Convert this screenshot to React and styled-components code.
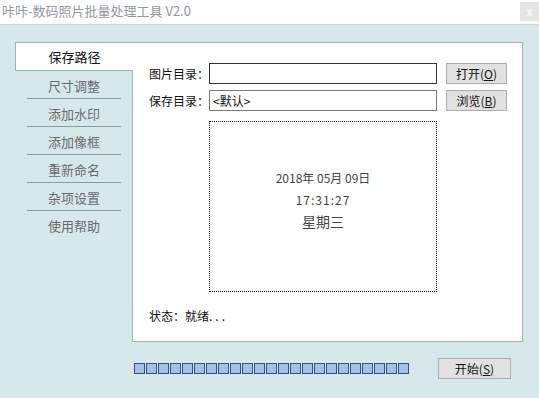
import React from "react";
import styled, { createGlobalStyle } from "styled-components";

const GlobalStyle = createGlobalStyle`
  html, body {
    margin: 0;
    padding: 0;
    background: #d7e8eb;
  }
  * {
    box-sizing: border-box;
  }
`;

const FONT = `"Noto Sans CJK SC", "Liberation Sans", sans-serif`;

const tabs = ["尺寸调整", "添加水印", "添加像框", "重新命名", "杂项设置", "使用帮助"];

export default function App() {
  const blocks = Array.from({ length: 23 });
  return (
    <Window>
      <GlobalStyle />
      <TitleBar>
        <Title>咔咔-数码照片批量处理工具 V2.0</Title>
        <CloseButton>x</CloseButton>
      </TitleBar>
      <Body>
        <Main>
          <Sidebar>
            <ActiveTab>保存路径</ActiveTab>
            <TabList>
              {tabs.map((t, i) => (
                <TabItem key={t} last={i === tabs.length - 1}>
                  {t}
                </TabItem>
              ))}
            </TabList>
          </Sidebar>
          <Panel>
            <FieldRow>
              <Label>图片目录：</Label>
              <Input dark />
              <Button>
                打开(<u>O</u>)
              </Button>
            </FieldRow>
            <FieldRow>
              <Label>保存目录：</Label>
              <Input>&lt;默认&gt;</Input>
              <Button>
                浏览(<u>B</u>)
              </Button>
            </FieldRow>
            <ClockBox>
              <DateLine>2018年 05月 09日</DateLine>
              <TimeLine>17:31:27</TimeLine>
              <WeekLine>星期三</WeekLine>
            </ClockBox>
            <Status>
              状态：就绪<Dots>...</Dots>
            </Status>
          </Panel>
        </Main>
        <Footer>
          <Progress>
            {blocks.map((_, i) => (
              <Block key={i} />
            ))}
          </Progress>
          <StartButton>
            开始(<u>S</u>)
          </StartButton>
        </Footer>
      </Body>
    </Window>
  );
}

const Window = styled.div`
  width: 539px;
  height: 398px;
  background: #d7e8eb;
  font-family: ${FONT};
  font-size: 12px;
  color: #111;
  overflow: hidden;
`;

const TitleBar = styled.div`
  height: 25px;
  background: #ffffff;
  border-bottom: 1px solid #cadcdf;
  display: flex;
  align-items: flex-start;
  justify-content: space-between;
`;

const Title = styled.div`
  padding: 2px 0 0 2px;
  font-size: 13px;
  color: #9297a0;
  line-height: 18px;
`;

const CloseButton = styled.div`
  margin-top: 2px;
  width: 19px;
  height: 19px;
  background: #e5e5e5;
  color: #f7f7f7;
  font-family: "Liberation Sans", sans-serif;
  font-size: 12px;
  font-weight: bold;
  display: flex;
  align-items: center;
  justify-content: center;
`;

const Body = styled.div`
  padding: 17px 16px 0 15px;
`;

const Main = styled.div`
  display: flex;
  height: 300px;
`;

const Sidebar = styled.div`
  width: 118px;
  display: flex;
  flex-direction: column;
  position: relative;
  z-index: 1;
  margin-right: -1px;
`;

const ActiveTab = styled.div`
  height: 29px;
  background: #ffffff;
  border: 1px solid #a4b0b3;
  border-right: none;
  display: flex;
  align-items: center;
  justify-content: center;
  font-size: 13px;
  color: #111;
`;

const TabList = styled.div`
  display: flex;
  flex-direction: column;
  align-items: center;
`;

const TabItem = styled.div`
  width: 94px;
  height: 28px;
  border-bottom: 1px solid ${(p) => (p.last ? "transparent" : "#8d9c9f")};
  display: flex;
  align-items: center;
  justify-content: center;
  padding-top: 2px;
  font-size: 13px;
  color: #6a6a6a;
`;

const Panel = styled.div`
  flex: 1;
  background: #ffffff;
  border: 1px solid #a4b0b3;
  padding: 20px 0 0 16px;
  display: flex;
  flex-direction: column;
`;

const FieldRow = styled.div`
  display: flex;
  align-items: center;
  height: 21px;
  margin-bottom: 6px;
`;

const Label = styled.div`
  width: 60px;
  flex-shrink: 0;
  white-space: nowrap;
  font-size: 12px;
  color: #111;
`;

const Input = styled.div`
  width: 228px;
  flex-shrink: 0;
  height: 21px;
  border: 1px solid ${(p) => (p.dark ? "#333" : "#7a7a7a")};
  background: #fff;
  padding: 0 3px;
  display: flex;
  align-items: center;
  font-size: 12px;
  color: #111;
`;

const Button = styled.div`
  margin-left: 9px;
  width: 61px;
  flex-shrink: 0;
  height: 21px;
  background: #e1e1e1;
  border: 1px solid #adadad;
  display: flex;
  align-items: center;
  justify-content: center;
  white-space: nowrap;
  font-size: 12px;
  color: #111;

  u {
    text-decoration: underline;
  }
`;

const ClockBox = styled.div`
  margin: 4px 0 0 60px;
  width: 228px;
  height: 171px;
  border: 1px dotted #111;
  display: flex;
  flex-direction: column;
  align-items: center;
  padding-top: 47px;
  color: #444;
`;

const DateLine = styled.div`
  font-size: 12px;
  line-height: 18px;
`;

const TimeLine = styled.div`
  margin-top: 4px;
  font-size: 12px;
  line-height: 18px;
  letter-spacing: 1px;
`;

const WeekLine = styled.div`
  margin-top: 2px;
  font-size: 14px;
  line-height: 20px;
`;

const Status = styled.div`
  margin-top: 15px;
  font-size: 12px;
  color: #111;
`;

const Dots = styled.span`
  letter-spacing: 3px;
`;

const Footer = styled.div`
  display: flex;
  align-items: center;
  justify-content: space-between;
  padding: 16px 12px 0 119px;
`;

const Progress = styled.div`
  display: flex;
  gap: 1px;
`;

const Block = styled.div`
  width: 11px;
  height: 11px;
  background: #a8c0e2;
  border: 1px solid #2a548e;
`;

const StartButton = styled(Button)`
  margin-left: 0;
  width: 73px;
`;
